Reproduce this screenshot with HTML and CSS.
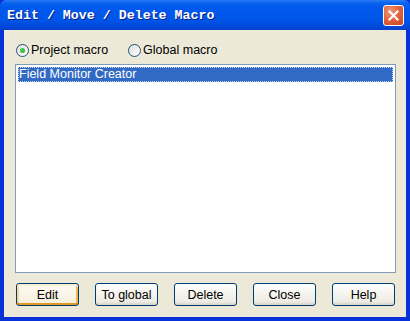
FILE: index.html
```html
<!DOCTYPE html>
<html>
<head>
<meta charset="utf-8">
<link rel="stylesheet" href="styles.css">
</head>
<body>
<div class="window">
  <div class="titlebar">
    <span class="title">Edit / Move / Delete Macro</span>
    <span class="close-btn">
      <svg width="21" height="21" viewBox="0 0 21 21">
        <path d="M6 6 L15 15 M15 6 L6 15" stroke="#fff" stroke-width="2.2" stroke-linecap="square"/>
      </svg>
    </span>
  </div>
  <div class="body">
    <div class="radios">
      <label class="radio"><span class="dot checked"></span>Project macro</label>
      <label class="radio"><span class="dot"></span>Global macro</label>
    </div>
    <div class="listbox">
      <div class="item selected">Field Monitor Creator</div>
    </div>
    <div class="buttons">
      <span class="btn default">Edit</span>
      <span class="btn">To global</span>
      <span class="btn">Delete</span>
      <span class="btn">Close</span>
      <span class="btn">Help</span>
    </div>
  </div>
</div>
</body>
</html>
```
FILE: styles.css
```css
html, body {
  margin: 0;
  padding: 0;
}
body {
  width: 410px;
  height: 321px;
  overflow: hidden;
  background: #ece9d8;
}
.window {
  width: 410px;
  height: 321px;
  box-sizing: border-box;
  display: flex;
  flex-direction: column;
  background: #0831d9;
}
.titlebar {
  height: 30px;
  flex: none;
  display: flex;
  align-items: center;
  justify-content: space-between;
  padding: 0 6px 0 7px;
  background: linear-gradient(to bottom, #2a7bf7 0px, #0a62ec 3px, #0058ee 8px, #0055e8 20px, #0048d8 27px, #0a3fc8 30px);
  border-radius: 6px 6px 0 0;
}
.title {
  font-family: "Liberation Mono", "DejaVu Sans Mono", monospace;
  font-weight: bold;
  font-size: 13.3px;
  color: #fff;
  text-shadow: 1px 1px 0 #0a1e8a;
  padding-top: 1px;
}
.close-btn {
  width: 21px;
  height: 21px;
  box-sizing: border-box;
  border: 1px solid #fff;
  border-radius: 3px;
  background: radial-gradient(circle at 35% 30%, #f09a7c 0%, #e4653f 45%, #c9401f 100%);
  display: flex;
  align-items: center;
  justify-content: center;
}
.close-btn svg {
  width: 19px;
  height: 19px;
}
.body {
  flex: 1;
  margin: 0 4px 4px 4px;
  background: #ece9d8;
  display: flex;
  flex-direction: column;
  padding: 12px 11px 0 11px;
  font-family: "Liberation Sans", Arial, sans-serif;
  font-size: 12.5px;
  color: #000;
}
.radios {
  display: flex;
  gap: 20px;
  height: 16px;
  align-items: center;
  padding-left: 1px;
}
.radio {
  display: flex;
  align-items: center;
  gap: 2px;
}
.dot {
  width: 13px;
  height: 13px;
  box-sizing: border-box;
  border: 1px solid #1c5180;
  border-radius: 50%;
  background: linear-gradient(135deg, #dcdcd6 0%, #f4f4f2 60%, #ffffff 100%);
  display: flex;
  align-items: center;
  justify-content: center;
}
.dot.checked::after {
  content: "";
  width: 5px;
  height: 5px;
  border-radius: 50%;
  background: radial-gradient(circle at 40% 40%, #55d055, #21a121);
}
.listbox {
  margin-top: 6px;
  height: 209px;
  width: 381px;
  box-sizing: border-box;
  border: 1px solid #7f9db9;
  background: #fff;
  padding: 2px;
}
.item {
  height: 15px;
  line-height: 15px;
  padding-left: 1px;
  box-sizing: border-box;
}
.item.selected {
  background: #316ac5;
  color: #fff;
  outline: 1px dotted #c8d6ee;
  outline-offset: -1px;
}
.buttons {
  display: flex;
  gap: 16px;
  margin-top: 10px;
  padding-left: 1px;
}
.btn {
  width: 63px;
  height: 23px;
  box-sizing: border-box;
  border: 1px solid #003c74;
  border-radius: 3px;
  background: linear-gradient(to bottom, #ffffff 0%, #f6f5f0 40%, #ecebe4 85%, #d6d0c5 100%);
  display: flex;
  align-items: center;
  justify-content: center;
  font-size: 12.5px;
  color: #000;
}
.btn.default {
  box-shadow: inset 0 2px 0 #fff0cf, inset 0 -2px 0 #e5971f, inset 2px 0 0 #fbd88d, inset -2px 0 0 #f5b64a;
  background: linear-gradient(to bottom, #fffaf0 0%, #fbf6ea 40%, #f4eedc 100%);
}
```
